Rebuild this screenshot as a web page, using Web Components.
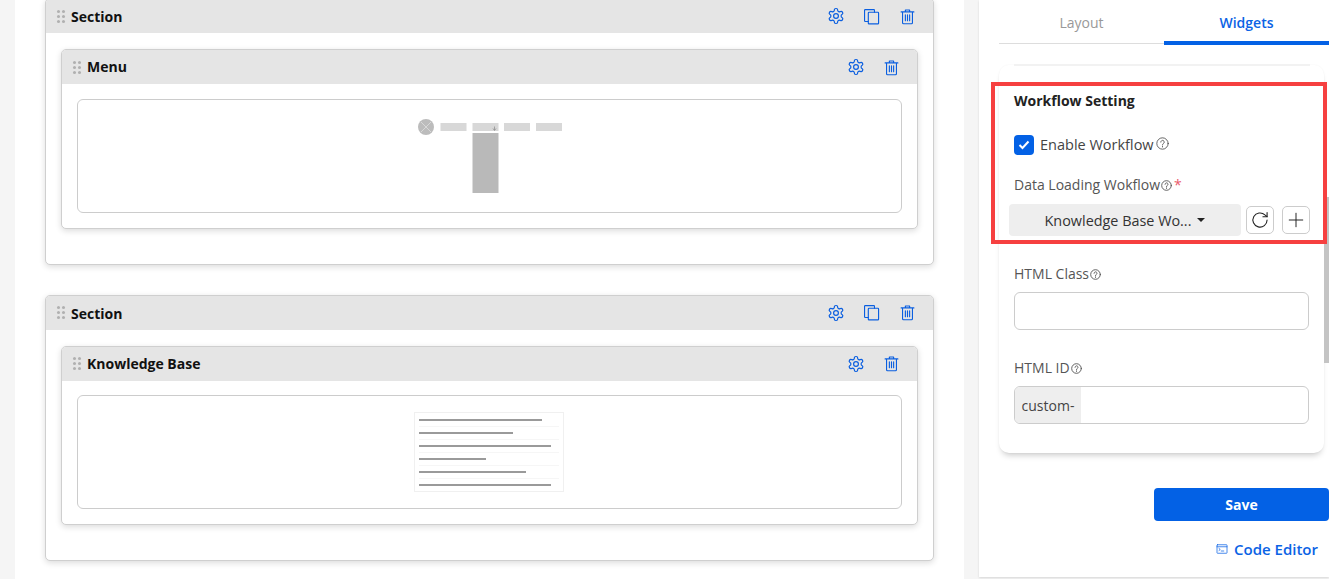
<!DOCTYPE html>
<html>
<head>
<meta charset="utf-8">
<title>Page builder</title>
<style>
  html, body { margin: 0; height: 579px; overflow: hidden; background: #fff; }
  body { font-family: "Open Sans", "Liberation Sans", sans-serif; }
</style>
</head>
<body>
<x-page>
  <x-section title="Section" copy>
    <x-widget title="Menu"><x-menu-thumb></x-menu-thumb></x-widget>
  </x-section>
  <x-section title="Section" copy>
    <x-widget title="Knowledge Base"><x-kb-thumb></x-kb-thumb></x-widget>
  </x-section>
  <x-side-panel slot="side"></x-side-panel>
</x-page>

<script>
const ICONS = {
  gear: '<path d="M12.22 2h-.44a2 2 0 0 0-2 2v.18a2 2 0 0 1-1 1.73l-.43.25a2 2 0 0 1-2 0l-.15-.08a2 2 0 0 0-2.73.73l-.22.38a2 2 0 0 0 .73 2.73l.15.1a2 2 0 0 1 1 1.72v.51a2 2 0 0 1-1 1.74l-.15.09a2 2 0 0 0-.73 2.73l.22.38a2 2 0 0 0 2.73.73l.15-.08a2 2 0 0 1 2 0l.43.25a2 2 0 0 1 1 1.73V20a2 2 0 0 0 2 2h.44a2 2 0 0 0 2-2v-.18a2 2 0 0 1 1-1.73l.43-.25a2 2 0 0 1 2 0l.15.08a2 2 0 0 0 2.73-.73l.22-.39a2 2 0 0 0-.73-2.73l-.15-.08a2 2 0 0 1-1-1.74v-.5a2 2 0 0 1 1-1.74l.15-.09a2 2 0 0 0 .73-2.73l-.22-.38a2 2 0 0 0-2.73-.73l-.15.08a2 2 0 0 1-2 0l-.43-.25a2 2 0 0 1-1-1.73V4a2 2 0 0 0-2-2z"/><circle cx="12" cy="12" r="3.2"/>',
  copy: '<path d="M7.5 19H3.2a1 1 0 0 1-1-1V3.2a1 1 0 0 1 1-1h12a1 1 0 0 1 1 1V6"/><rect x="7.5" y="6" width="14.5" height="16.5" rx="1"/>',
  trash: '<path d="M3 5.5h18M9 5.5V2.8h6v2.7M5 5.5v15.2a1.5 1.5 0 0 0 1.5 1.5h11a1.5 1.5 0 0 0 1.5-1.5V5.5M9 9.5v8.5M12 9.5v8.5M15 9.5v8.5"/>',
  help: '<circle cx="12" cy="12" r="10.5"/><path d="M8.8 9.4a3.2 3.2 0 1 1 4.9 2.7c-1.1.7-1.7 1.3-1.7 2.6"/><path d="M12 17.2v1.2"/>',
  refresh: '<path d="M20.5 12a8.5 8.5 0 1 1-2.6-6.1L20.5 8"/><path d="M20.5 3v5h-5"/>',
  plus: '<path d="M12 3v18M3 12h18"/>',
  terminal: '<rect x="2" y="3.5" width="20" height="17" rx="1"/><path d="M2 7.5h20M6 11l2.5 2L6 15M10.5 16h5"/>'
};

class XIcon extends HTMLElement {
  connectedCallback() {
    const size = this.getAttribute('size') || 16;
    const sw = this.getAttribute('stroke') || 1.6;
    this.attachShadow({ mode: 'open' }).innerHTML = `
      <style>
        :host { display: inline-flex; flex: none; color: inherit; }
        svg { display: block; }
      </style>
      <svg width="${size}" height="${size}" viewBox="0 0 24 24" fill="none" stroke="currentColor"
           stroke-width="${sw}" stroke-linecap="round" stroke-linejoin="round">${ICONS[this.getAttribute('name')]}</svg>`;
  }
}
customElements.define('x-icon', XIcon);

class XHandle extends HTMLElement {
  connectedCallback() {
    this.attachShadow({ mode: 'open' }).innerHTML = `
      <style>
        :host { display: grid; grid-template-columns: 3px 3px; gap: 2px; flex: none; }
        i { width: 3px; height: 3px; border-radius: 50%; background: #b0b0b0; }
      </style>
      <i></i><i></i><i></i><i></i><i></i><i></i>`;
  }
}
customElements.define('x-handle', XHandle);

// header bar shared by section and widget
class XBar extends HTMLElement {
  connectedCallback() {
    const hasCopy = this.hasAttribute('copy');
    const copy = hasCopy ? '<span class="btn s"><x-icon name="copy" size="17"></x-icon></span>' : '';
    this.attachShadow({ mode: 'open' }).innerHTML = `
      <style>
        :host { display: flex; align-items: center; height: 34px; background: #e5e5e5;
                padding: 0 7px 0 11px; box-sizing: border-box; }
        .t { margin-left: 6px; flex: 1; font-size: 14px; font-weight: 700; color: #111; }
        .t.sec { margin-top: 1px; }
        .t.wid { margin-bottom: 1px; }
        .btn { width: 36px; display: flex; justify-content: center; color: #0b5fe0; }
        .btn.s x-icon { margin-right: 2px; }
      </style>
      <x-handle></x-handle>
      <span class="t ${hasCopy ? 'sec' : 'wid'}">${this.getAttribute('title')}</span>
      <span class="btn"><x-icon name="gear" size="18"></x-icon></span>
      ${copy}
      <span class="btn s"><x-icon name="trash" size="17"></x-icon></span>`;
  }
}
customElements.define('x-bar', XBar);

class XSection extends HTMLElement {
  connectedCallback() {
    const copy = this.hasAttribute('copy') ? 'copy' : '';
    this.attachShadow({ mode: 'open' }).innerHTML = `
      <style>
        :host { display: block; background: #fff; border: 1px solid #cfcfcf; border-radius: 5px;
                box-shadow: 0 2px 6px rgba(0,0,0,.14); overflow: hidden; height: 266.5px; box-sizing: border-box; }
        .body { padding: 16px 15px 0; }
      </style>
      <x-bar title="${this.getAttribute('title')}" ${copy}></x-bar>
      <div class="body"><slot></slot></div>`;
  }
}
customElements.define('x-section', XSection);

class XWidget extends HTMLElement {
  connectedCallback() {
    this.attachShadow({ mode: 'open' }).innerHTML = `
      <style>
        :host { display: block; background: #fff; border: 1px solid #cfcfcf; border-radius: 5px;
                box-shadow: 0 2px 6px rgba(0,0,0,.14); overflow: hidden; height: 179.5px; box-sizing: border-box; }
        .body { padding: 14.5px 15px 0; }
        .frame { height: 114px; box-sizing: border-box; border: 1px solid #ccc; border-radius: 6px;
                 display: flex; align-items: center; justify-content: center; }
        ::slotted(*) { margin-left: -1px; }
      </style>
      <x-bar title="${this.getAttribute('title')}"></x-bar>
      <div class="body"><div class="frame"><slot></slot></div></div>`;
  }
}
customElements.define('x-widget', XWidget);

class XMenuThumb extends HTMLElement {
  connectedCallback() {
    this.attachShadow({ mode: 'open' }).innerHTML = `
      <style>:host { display: block; width: 150px; height: 80px; } svg { display: block; }</style>
      <svg width="150" height="80" viewBox="0 0 150 80">
        <circle cx="12" cy="11" r="8" fill="#bcbcbc"/>
        <path d="M7 6l10 10M17 6L7 16" stroke="#d8d8d8" stroke-width="1"/>
        <g fill="#d8d8d8">
          <rect x="26.5" y="7" width="26" height="8"/>
          <rect x="58.5" y="7" width="26" height="8"/>
          <rect x="90" y="7" width="26" height="8"/>
          <rect x="122" y="7" width="26" height="8"/>
        </g>
        <path d="M80.5 10.5v3.5M79 12.5l1.5 2 1.5-2" stroke="#888" stroke-width=".7" fill="none"/>
        <rect x="58.5" y="17" width="26" height="60" fill="#b9b9b9"/>
      </svg>`;
  }
}
customElements.define('x-menu-thumb', XMenuThumb);

class XKbThumb extends HTMLElement {
  connectedCallback() {
    const ends = [128, 99, 137, 72, 112, 137];
    const lines = ends.map((e, i) => {
      const y = 8 + Math.round(i * 13.05);
      const sep = i < 5 ? `<rect x="5" y="${y + 6}" width="140" height="1" fill="#f6f6f6"/>` : '';
      return `<rect x="5" y="${y - 1}" width="${e - 5}" height="2" fill="#9a9a9a"/>${sep}`;
    }).join('');
    this.attachShadow({ mode: 'open' }).innerHTML = `
      <style>
        :host { display: block; width: 150px; height: 80px; box-sizing: border-box; }
        svg { display: block; }
      </style>
      <svg width="150" height="80" viewBox="0 0 150 80">
        <rect x=".5" y=".5" width="149" height="79" fill="#fff" stroke="#f0f0f0"/>
        ${lines}
      </svg>`;
  }
}
customElements.define('x-kb-thumb', XKbThumb);

class XLabel extends HTMLElement {
  connectedCallback() {
    this.attachShadow({ mode: 'open' }).innerHTML = `
      <style>
        :host { display: flex; align-items: center; font-size: 14px; color: #555; line-height: 20px; height: 20px; }
        x-icon { margin-left: 1px; color: #555; }
        b { color: #ea5a6c; font-weight: 400; margin-left: 2px; }
      </style>
      <slot></slot><x-icon name="help" size="11" stroke="2"></x-icon>
      ${this.hasAttribute('required') ? '<b>*</b>' : ''}`;
  }
}
customElements.define('x-label', XLabel);

class XSidePanel extends HTMLElement {
  connectedCallback() {
    this.attachShadow({ mode: 'open' }).innerHTML = `
      <style>
        :host { display: flex; flex-direction: column; width: 350px; height: 577px;
                background: #fff; box-shadow: 0 1px 2px rgba(0,0,0,.12); padding-left: 20px; box-sizing: border-box; }
        .tabs { display: flex; align-items: flex-start; height: 45px; font-size: 14px; flex: none; }
        .tabs div { width: 165px; height: 44px; box-sizing: border-box; text-align: center; line-height: 46px;
                    color: #999; border-bottom: 1px solid #ddd; }
        .tabs .on { height: 45px; color: #0b63e5; font-weight: 600; border-bottom: 4px solid #0361e5; }
        .card { margin-top: 20px; width: 325px; height: 388px; border-radius: 10px; background: #fff; flex: none;
                box-shadow: 0 5px 6px -3px rgba(0,0,0,.22), 0 0 2px rgba(0,0,0,.05); position: relative;
                box-sizing: border-box; padding-top: 17px; }
        .card::before { content: ""; position: absolute; left: 15px; right: 14px; top: -1px; height: 2px; background: #f2f2f2; }
        .thumb { position: absolute; right: -5px; top: 132px; width: 5px; height: 166px; background: #c4c4c4; }
        .wf { position: relative; z-index: 1; margin: 0 -3px 0 -8px; height: 162px; box-sizing: border-box; border: 4px solid #f64040;
              padding: 5px 0 0 19px; }
        .wf h4 { margin: 0; font-size: 14px; font-weight: 700; color: #222; line-height: 20px; }
        .check { display: flex; align-items: center; margin-top: 24px; font-size: 14.5px; color: #444; height: 20px; }
        .check span.txt { margin-top: -2px; }
        .box { width: 20px; height: 20px; background: #0361e5; border-radius: 4px; margin-right: 6px;
               display: flex; align-items: center; justify-content: center; flex: none; }
        .check x-icon { margin-left: 2px; color: #444; align-self: flex-start; margin-top: 2px; }
        .wf x-label { margin-top: 20px; }
        .row { display: flex; align-items: center; margin: 9px 0 0 -5px; }
        .sel { width: 232px; height: 32px; background: #eee; border-radius: 4px; font-size: 14.4px; color: #333;
               display: flex; align-items: center; justify-content: center; gap: 6px; }
        .sel i { border: 4px solid transparent; border-top-color: #222; border-bottom: 0; }
        .sq { width: 28px; height: 28px; box-sizing: border-box; border: 1px solid #ccc; border-radius: 5px;
              display: flex; align-items: center; justify-content: center; color: #222; }
        .sq.a { margin-left: 5px; }
        .sq.b { margin-left: 8px; }
        .fields { padding: 0 15px; }
        .fields x-label { margin-top: 20px; }
        .input { height: 38px; margin-top: 8px; border: 1px solid #ccc; border-radius: 6px; box-sizing: border-box;
                 display: flex; overflow: hidden; font-size: 14px; color: #444; }
        .input span { width: 66px; background: #eee; display: flex; align-items: center; justify-content: center; }
        .f2 { margin-top: 28px !important; }
        .actions { flex: none; margin-top: 35px; display: flex; flex-direction: column; align-items: flex-end; }
        .save { width: 175px; height: 33px; background: #0361e5; color: #fff; border-radius: 4px; font-size: 14px;
                font-weight: 700; display: flex; align-items: center; justify-content: center; }
        .code { margin: 18px 11px 0 0; display: flex; align-items: center; gap: 6px; color: #0b63e5;
                font-size: 15px; font-weight: 600; line-height: 20px; }
      </style>
      <div class="tabs"><div>Layout</div><div class="on">Widgets</div></div>
      <div class="card">
        <div class="wf">
          <h4>Workflow Setting</h4>
          <div class="check">
            <span class="box"><svg width="12" height="10" viewBox="0 0 12 10"><path d="M1.5 5l3 3 6-6.5" fill="none" stroke="#fff" stroke-width="2"/></svg></span>
            <span class="txt">Enable Workflow</span><x-icon name="help" size="13" stroke="1.5"></x-icon>
          </div>
          <x-label required>Data Loading Wokflow</x-label>
          <div class="row">
            <div class="sel">Knowledge Base Wo... <i></i></div>
            <div class="sq a"><x-icon name="refresh" size="20" stroke="1.3"></x-icon></div>
            <div class="sq b"><x-icon name="plus" size="18" stroke="1.3"></x-icon></div>
          </div>
        </div>
        <div class="fields">
          <x-label>HTML Class</x-label>
          <div class="input"></div>
          <x-label class="f2">HTML ID</x-label>
          <div class="input"><span>custom-</span></div>
        </div>
        <div class="thumb"></div>
      </div>
      <div class="actions">
        <div class="save">Save</div>
        <div class="code"><x-icon name="terminal" size="12" stroke="1.5"></x-icon>Code Editor</div>
      </div>`;
  }
}
customElements.define('x-side-panel', XSidePanel);

class XPage extends HTMLElement {
  connectedCallback() {
    this.attachShadow({ mode: 'open' }).innerHTML = `
      <style>
        :host { display: flex; height: 579px; background: #f5f5f5; padding-left: 15px; box-sizing: border-box; overflow: hidden; }
        main { width: 949px; flex: none; background: #fff; box-sizing: border-box; padding: 0 30px; height: 579px; overflow: hidden; }
        .col { display: flex; flex-direction: column; gap: 30px; margin-top: -1.8px; }
        aside { margin-left: 15px; flex: none; }
        .edge { flex: 1; background: #fff; }
      </style>
      <main><div class="col"><slot></slot></div></main>
      <aside><slot name="side"></slot></aside>
      <div class="edge"></div>`;
  }
}
customElements.define('x-page', XPage);
</script>
</body>
</html>
